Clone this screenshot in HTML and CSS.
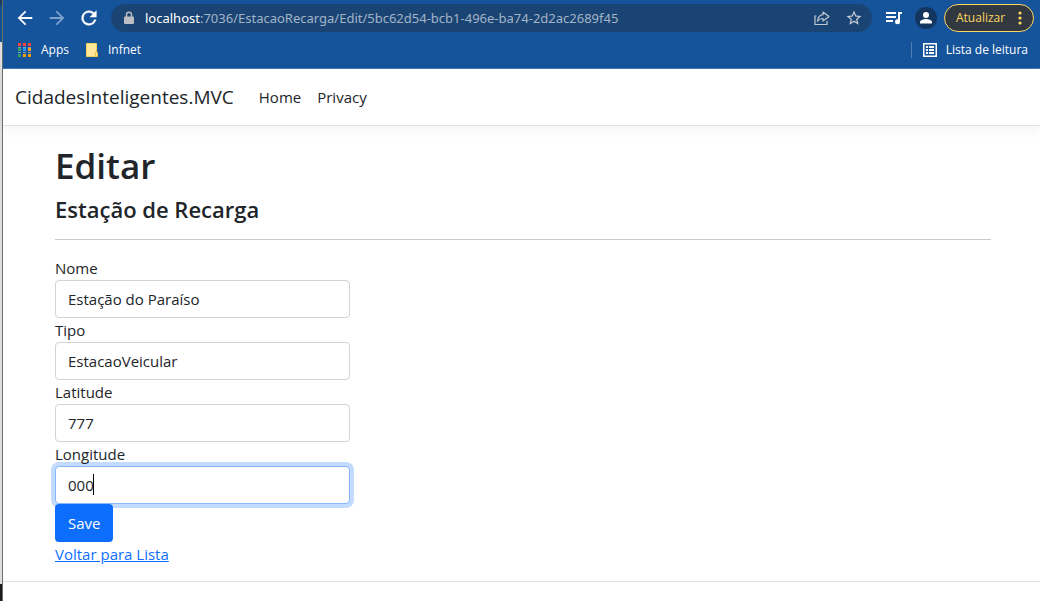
FILE: index.html
```html
<!DOCTYPE html>
<html lang="pt-BR">
<head>
<meta charset="utf-8">
<title>Editar - CidadesInteligentes.MVC</title>
<link rel="stylesheet" href="styles.css">
</head>
<body>
<div class="desktop-edge" aria-hidden="true"></div>
<div class="window">
  <div class="browser">
    <div class="toolbar">
      <button class="icon-button" aria-label="Voltar"><svg width="22" height="22" viewBox="0 0 24 24"><path fill="#fff" d="M20 11H7.8l5.6-5.6L12 4l-8 8 8 8 1.4-1.4L7.800 13H20z"/></svg></button>
      <button class="icon-button" aria-label="Avançar"><svg width="22" height="22" viewBox="0 0 24 24"><path fill="#7da2cf" d="M4 11h12.200l-5.600-5.600L12 4l8 8-8 8-1.400-1.400L16.200 13H4z"/></svg></button>
      <button class="icon-button" aria-label="Recarregar"><svg width="22" height="22" viewBox="0 0 24 24"><path fill="#fff" stroke="#fff" stroke-width=".5" d="M17.650 6.350A8 8 0 1 0 19.730 14h-2.080A6 6 0 1 1 12 6c1.660 0 3.140.69 4.220 1.780L13 11h7V4z"/></svg></button>
      <div class="address">
        <svg width="14" height="14" viewBox="0 0 14 14"><path fill="#bcbec1" d="M3 5.500h8a1 1 0 0 1 1 1V12a1 1 0 0 1-1 1H3a1 1 0 0 1-1-1V6.500a1 1 0 0 1 1-1z"/><path fill="none" stroke="#bcbec1" stroke-width="1.400" d="M4.500 6V3.700a2.500 2.500 0 0 1 5 0V6"/></svg>
        <span class="url"><span class="host">localhost</span>:7036/EstacaoRecarga/Edit/5bc62d54-bcb1-496e-ba74-2d2ac2689f45</span>
        <button class="icon-button" aria-label="Compartilhar"><svg width="18" height="18" viewBox="0 0 18 18" fill="none" stroke="#c0c7d0" stroke-width="1.200"><path d="M3.500 7H2v8.500h12V12"/><path stroke-linejoin="round" d="M10 3l6 4.500-6 4.500V9.500c-2.500 0-4.300.7-5.500 2.700.3-3.700 2-6 5.500-6.500z"/></svg></button>
        <button class="icon-button" aria-label="Adicionar aos favoritos"><svg width="18" height="18" viewBox="0 0 24 24"><path fill="#c8ced6" d="M22 9.240l-7.190-.62L12 2 9.190 8.630 2 9.240l5.460 4.730L5.820 21 12 17.270 18.180 21l-1.630-7.030zM12 15.400l-3.760 2.270 1-4.280-3.320-2.880 4.380-.38L12 6.100l1.710 4.040 4.380.38-3.320 2.880 1 4.280z"/></svg></button>
      </div>
      <button class="icon-button media" aria-label="Controles de mídia"><svg width="18" height="16" viewBox="0 0 18 16"><path fill="#fff" d="M1 2h10v2H1zM1 6h10v2H1zM1 10h7v2H1zM13 2h4v2h-2v8h-2z"/><circle cx="12.500" cy="11.800" r="2.500" fill="#fff"/></svg></button>
      <button class="profile" aria-label="Perfil"><svg width="22" height="22" viewBox="0 0 22 22"><circle cx="11" cy="11" r="11" fill="#12365f"/><circle cx="11" cy="8" r="3" fill="#fff"/><path fill="#fff" d="M5 16.500V15c0-2 4-3 6-3s6 1 6 3v1.500z"/></svg></button>
      <button class="update">Atualizar<svg width="4" height="14" viewBox="0 0 4 14" fill="#fdd663"><circle cx="2" cy="2" r="1.600"/><circle cx="2" cy="7" r="1.600"/><circle cx="2" cy="12" r="1.600"/></svg></button>
    </div>
    <div class="bookmarks">
      <a href="#" class="bookmark"><svg width="13" height="14" viewBox="0 0 13 14"><path fill="#f44336" d="M0 0h3v3H0zM5 0h3v3H5zM10 0h3v3h-3z"/><path fill="#7fa0c0" d="M0 4h3v1H0zM5 4h3v1H5zM10 4h3v1h-3zM0 9h3v1H0zM5 9h3v1H5zM10 9h3v1h-3z"/><path fill="#34a060" d="M0 5h3v3H0zM0 11h3v3H0z"/><path fill="#2196f3" d="M5 5h3v3H5z"/><path fill="#ffa000" d="M10 5h3v3h-3zM5 11h3v3H5zM10 11h3v3h-3z"/></svg>Apps</a>
      <a href="#" class="bookmark"><svg width="12" height="14" viewBox="0 0 12 14"><path fill="#ffe89a" stroke="#f5cf5c" d="M.5.500h10v9h1v4H.500z"/><path fill="#ffe89a" stroke="#e8bf45" d="M9.500 13.500v-4h2v4z"/></svg>Infnet</a>
      <a href="#" class="bookmark reading"><svg width="14" height="14" viewBox="0 0 14 14"><path fill="none" stroke="#fff" stroke-width="1.500" d="M.75.750h12.500v12.500H.750z"/><path fill="#fff" d="M3 3h2v2H3zM6 3h5v2H6zM3 6h2v2H3zM6 6h5v2H6zM3 9h2v2H3zM6 9h5v2H6z"/></svg>Lista de leitura</a>
    </div>
  </div>
  <header class="site-header">
    <a href="#" class="brand">CidadesInteligentes.MVC</a>
    <nav class="nav"><a href="#">Home</a><a href="#">Privacy</a></nav>
  </header>
  <main class="content">
    <h1>Editar</h1>
    <h4>Estação de Recarga</h4>
    <hr>
    <form class="form">
      <div class="group"><label for="nome">Nome</label><input id="nome" type="text" value="Estação do Paraíso"></div>
      <div class="group"><label for="tipo">Tipo</label><input id="tipo" type="text" value="EstacaoVeicular"></div>
      <div class="group"><label for="latitude">Latitude</label><input id="latitude" type="text" value="777"></div>
      <div class="group"><label for="longitude">Longitude</label><input id="longitude" class="focused" type="text" value="000"><span class="caret"></span></div>
      <button class="save" type="submit">Save</button>
    </form>
    <a href="#" class="back">Voltar para Lista</a>
  </main>
  <footer class="footer"></footer>
</div>
</body>
</html>
```
FILE: styles.css
```css
* { box-sizing: border-box; }
body {
  margin: 0;
  min-height: 100vh;
  display: flex;
  background: #fff;
  color: #212529;
  font: 15px/24px "Segoe UI", "Open Sans", "Noto Sans", sans-serif;
}
button, input { font: inherit; color: inherit; }
svg { display: block; flex: none; }
a { color: inherit; text-decoration: none; }
.desktop-edge {
  width: 3px;
  flex: none;
  border-right: 1px solid #6e6e6e;
  background: linear-gradient(#1b3a5c 5px, #14508f 5px 42px, #dedede 42px 584px, #1b1b1b 584px);
}
.window { flex: 1; min-width: 0; display: flex; flex-direction: column; }

.browser {
  background: #15539a;
  border-bottom: 1px solid #4279b5;
  color: #fff;
  font-size: 12px;
  line-height: 16px;
}
.toolbar { display: flex; align-items: center; height: 36px; padding: 0 6px 0 11px; }
.icon-button, .profile { padding: 0; border: 0; background: none; }
.toolbar > .icon-button { margin-right: 10px; }
.address {
  flex: 1;
  min-width: 0;
  display: flex;
  align-items: center;
  gap: 14px;
  height: 28px;
  margin-left: 1px;
  padding: 0 9px 0 11px;
  border-radius: 14px;
  background: #1a4474;
}
.url { flex: 1; margin-left: -5px; overflow: hidden; white-space: nowrap; font-family: "Segoe UI", "Noto Sans", sans-serif; font-size: 13px; color: #a3b4c7; }
.host { color: #fff; }
.toolbar > .media { margin: 0 12px 0 13px; }
.update {
  display: flex;
  align-items: center;
  justify-content: space-between;
  width: 90px;
  height: 28px;
  margin-left: 7px;
  padding: 0 11px;
  border: 1px solid #fdd663;
  border-radius: 14px;
  background: #31383f;
  color: #fdd663;
}
.bookmarks { display: flex; align-items: center; gap: 17px; height: 32px; padding: 0 12px 4px 15px; }
.bookmark { display: flex; align-items: center; gap: 10px; }
.reading { gap: 9px; margin-left: auto; padding-left: 11px; border-left: 1px solid #4f7fb5; }

.site-header {
  display: flex;
  align-items: center;
  gap: 25px;
  height: 57px;
  padding: 0 12px;
  border-bottom: 1px solid #dee2e6;
  box-shadow: 0 4px 12px rgba(0, 0, 0, .05);
}
.brand { font-size: 19px; }
.nav { display: flex; gap: 16px; }

.content { padding: 16px 49px 15px 52px; }
h1, h4 { margin: 0; font-weight: 600; }
h1 { font-size: 35px; line-height: 48px; margin-bottom: 5px; }
h4 { font-size: 22px; line-height: 28px; }
hr { margin: 16px 0; border: 0; border-top: 1px solid #c8c9ca; }
.form { max-width: 295px; }
.group { position: relative; }
.group label { display: block; }
.group input {
  display: block;
  width: 100%;
  height: 38px;
  padding: 6px 12px;
  border: 1px solid #ced4da;
  border-radius: 4px;
  background: #fff;
  outline: 0;
}
.group .focused { border-color: #86b7fe; box-shadow: 0 0 0 4px #c2dbfe; }
.caret { position: absolute; left: 38px; bottom: 9px; width: 1px; height: 21px; background: #000; }
.save {
  position: relative;
  display: block;
  height: 38px;
  padding: 0 13px;
  border: 0;
  border-radius: 4px;
  background: #0d6efd;
  color: #fff;
}
.back { color: #0d6efd; text-decoration: underline; }
.footer { border-top: 1px solid #dee2e6; }
```
